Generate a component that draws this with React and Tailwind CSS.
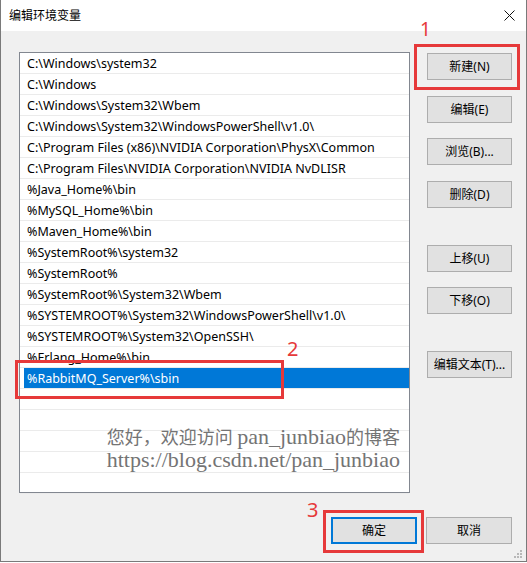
const paths = [
  'C:\\Windows\\system32',
  'C:\\Windows',
  'C:\\Windows\\System32\\Wbem',
  'C:\\Windows\\System32\\WindowsPowerShell\\v1.0\\',
  'C:\\Program Files (x86)\\NVIDIA Corporation\\PhysX\\Common',
  'C:\\Program Files\\NVIDIA Corporation\\NVIDIA NvDLISR',
  '%Java_Home%\\bin',
  '%MySQL_Home%\\bin',
  '%Maven_Home%\\bin',
  '%SystemRoot%\\system32',
  '%SystemRoot%',
  '%SystemRoot%\\System32\\Wbem',
  '%SYSTEMROOT%\\System32\\WindowsPowerShell\\v1.0\\',
  '%SYSTEMROOT%\\System32\\OpenSSH\\',
  '%Erlang_Home%\\bin',
  '%RabbitMQ_Server%\\sbin',
  '',
  '',
  '',
  '',
  '',
];

const uiFont = { fontFamily: '"Noto Sans", "Noto Sans CJK SC", sans-serif' };

function Btn({ children, className = '' }) {
  return (
    <div
      className={`flex h-[27px] w-[85px] items-center justify-center border border-[#adadad] bg-[#e1e1e1] text-[12px] text-black ${className}`}
    >
      {children}
    </div>
  );
}

export default function App() {
  return (
    <div
      className="relative h-[562px] w-[527px] overflow-hidden border-x border-b border-[#7a7a7a] bg-[#f0f0f0]"
      style={uiFont}
    >
      {/* Title bar */}
      <div className="flex h-[31px] items-center justify-between bg-white pl-[8px] pr-[10px]">
        <span className="text-[12px] text-black">编辑环境变量</span>
        <svg width="11" height="11" viewBox="0 0 11 11" className="mr-[1px]">
          <path d="M0.5 0.5 L10.5 10.5 M10.5 0.5 L0.5 10.5" stroke="#111" strokeWidth="1" />
        </svg>
      </div>

      {/* Body */}
      <div className="flex flex-col pl-[18px] pr-[14px] pt-[21px]">
        <div className="flex gap-[17px]">
          {/* List */}
          <div className="relative h-[441px] w-[391px] border border-[#828790] bg-white">
            {paths.map((p, i) => {
              const sel = i === 15;
              return (
                <div key={i} className="flex h-[21px] items-stretch border-b border-[#ebebeb]">
                  <div
                    className={`ml-[4px] flex flex-1 items-center pl-[3px] pt-[2px] text-[12.5px] whitespace-nowrap ${
                      sel ? 'bg-[#0078d7] text-white' : 'text-black'
                    }`}
                  >
                    {p}
                  </div>
                </div>
              );
            })}
            {/* watermark */}
            <div
              className="pointer-events-none absolute right-[9px] top-[373px] text-right text-[22px] leading-[22px] text-[#747474]"
              style={{ fontFamily: '"Liberation Serif", "Noto Sans CJK SC", serif' }}
            >
              <div>
                <span className="text-[18px]">您好，欢迎访问 </span>
                pan_junbiao
                <span className="text-[18px]">的博客</span>
              </div>
              <div>https://blog.csdn.net/pan_junbiao</div>
            </div>
          </div>

          {/* Side buttons */}
          <div className="flex flex-col pt-[1px]">
            <Btn>新建(N)</Btn>
            <Btn className="mt-[16px]">编辑(E)</Btn>
            <Btn className="mt-[15px]">浏览(B)...</Btn>
            <Btn className="mt-[16px]">删除(D)</Btn>
            <Btn className="mt-[37px]">上移(U)</Btn>
            <Btn className="mt-[15px]">下移(O)</Btn>
            <Btn className="mt-[37px]">编辑文本(T)...</Btn>
          </div>
        </div>

        {/* Bottom buttons */}
        <div className="mt-[24px] flex justify-end gap-[9px]">
          <div className="flex h-[27px] w-[86px] items-center justify-center border-2 border-[#0078d7] bg-[#e1e1e1] text-[12px] text-black">
            确定
          </div>
          <Btn className="w-[86px]">取消</Btn>
        </div>
      </div>

      {/* resize grip */}
      <svg className="absolute bottom-[2px] right-[3px]" width="9" height="9" viewBox="0 0 9 9">
        {[
          [6, 0],
          [3, 3],
          [6, 3],
          [0, 6],
          [3, 6],
          [6, 6],
        ].map(([x, y], i) => (
          <rect key={i} x={x} y={y} width="2" height="2" fill="#b8b8b8" />
        ))}
      </svg>

      {/* Red annotations */}
      <div className="absolute left-[413px] top-[44px] h-[46px] w-[106px] border-[3px] border-[#e6393a]" />
      <div className="absolute left-[419px] top-[18px] text-[19px] leading-[22px] text-[#e6393a]">1</div>

      <div className="absolute left-[14px] top-[360px] h-[39px] w-[269px] border-[3px] border-[#e6393a]" />
      <div className="absolute left-[286px] top-[338px] text-[20px] leading-[22px] text-[#e6393a]">2</div>

      <div className="absolute left-[322px] top-[510px] h-[43px] w-[101px] border-[3px] border-[#e6393a]" />
      <div className="absolute left-[306px] top-[499px] text-[20px] leading-[22px] text-[#e6393a]">3</div>
    </div>
  );
}
